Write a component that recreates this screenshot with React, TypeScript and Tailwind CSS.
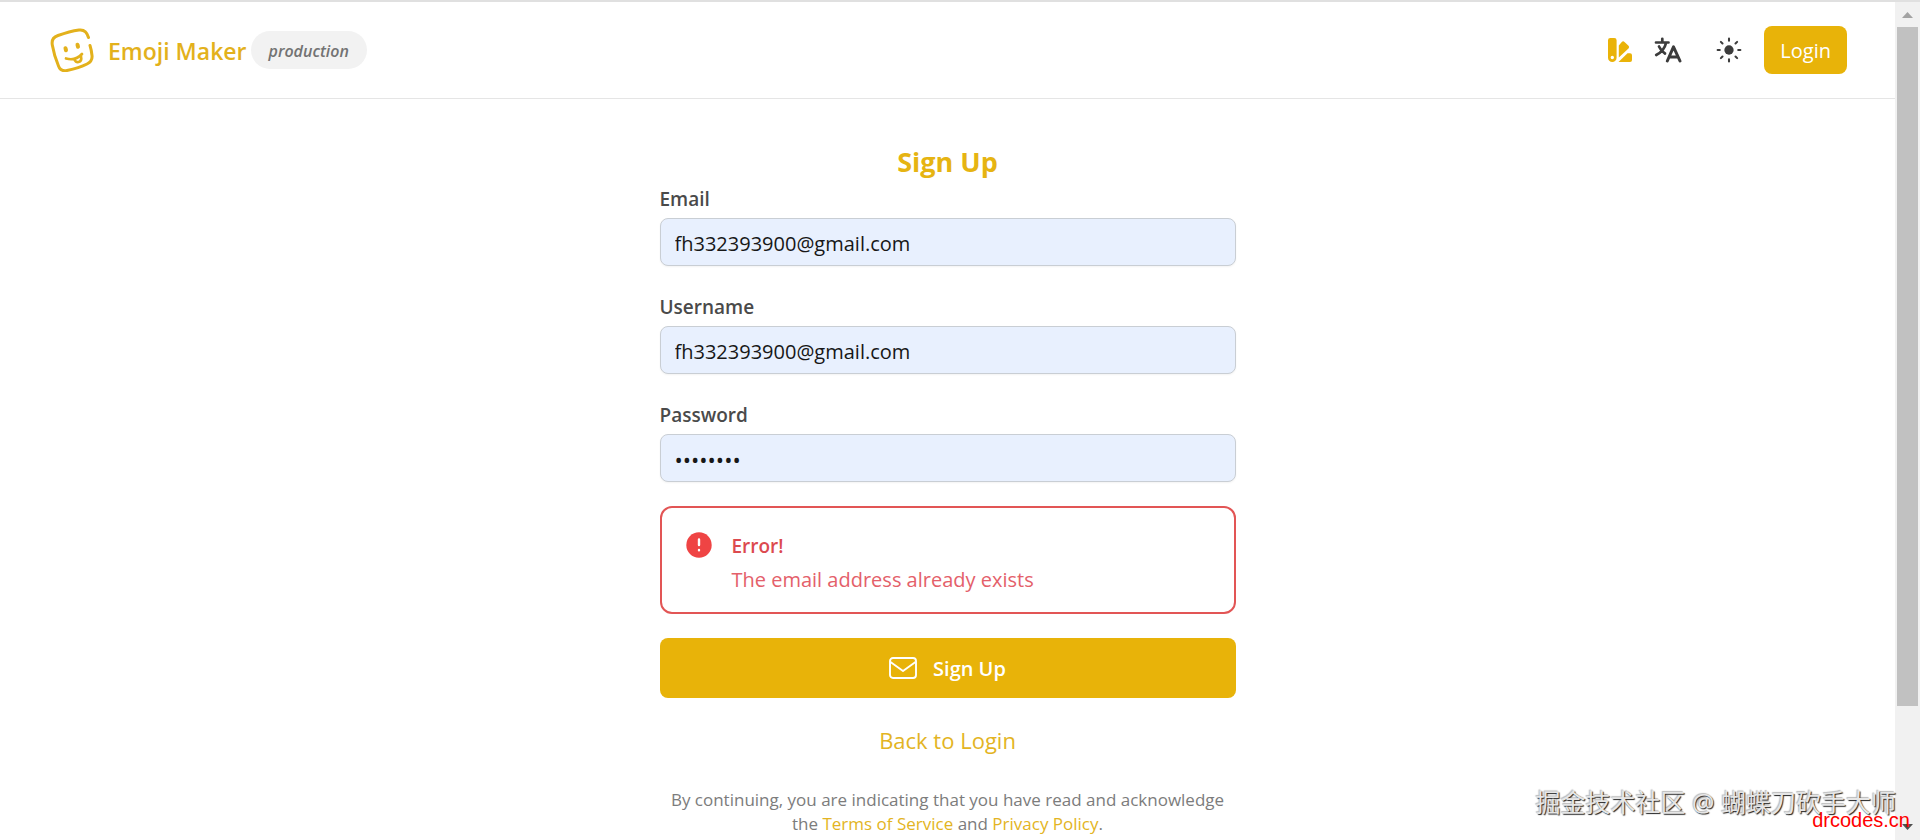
const fields = [
  { id: "email", label: "Email", type: "email", value: "fh332393900@gmail.com", size: "text-xl" },
  { id: "username", label: "Username", type: "text", value: "fh332393900@gmail.com", size: "text-xl" },
  { id: "password", label: "Password", type: "password", value: "password", size: "text-[22px]" },
];

function LogoIcon() {
  return (
    <svg viewBox="0 0 44 44" className="h-11 w-11" fill="none" stroke="currentColor" strokeWidth="3" strokeLinecap="round" aria-hidden="true">
      <path d="M38.500 9.500C37 4 34 1.300 29 2C22 3 15 5 8 7.500C3.500 9 1.500 12.500 2.300 17C3.500 24 5.500 31 8.500 38C10 42 13 43.300 17 42.500C24 41 31 39 37 36C41 34 42.500 31.500 42 27.500C41.600 24 41 20.500 40 17.500" />
      <path d="M15.500 20.300L16 22.300M27.500 16.700L28 18.700" strokeWidth="4" />
      <path d="M16 30.500C22 32.200 28 30.500 32 26M24.500 31C25 36 32.500 35 31 28.500" strokeWidth="2.700" />
    </svg>
  );
}

function SwatchIcon() {
  return (
    <svg viewBox="0 0 24 24" className="h-6 w-6" fill="currentColor" aria-hidden="true">
      <path fillRule="evenodd" d="M2.300 0h4a2.300 2.300 0 0 1 2.300 2.300V19.700a4.300 4.300 0 0 1-8.600 0V2.300A2.300 2.300 0 0 1 2.300 0zM4.300 17.800a1.700 1.700 0 1 0 0 3.400a1.700 1.700 0 0 0 0-3.400z" />
      <path d="M10.800 7.600L13.800 4a1.900 1.900 0 0 1 2.700 0l4 3.700a1.900 1.900 0 0 1 0 2.700L10.800 19.600z" />
      <path d="M10.500 24L19.500 15.200h2.500a2 2 0 0 1 2 2V22a2 2 0 0 1-2 2z" />
    </svg>
  );
}

function TranslateIcon() {
  return (
    <svg viewBox="0 0 28 26" className="h-[26px] w-7" fill="none" stroke="currentColor" strokeWidth="2.700" strokeLinecap="round" strokeLinejoin="round" aria-hidden="true">
      <path d="M2 5.500h12.500M8.300 1.800v3.700M12 6C10.700 12 7 15.600 2.200 18M5 9.500C6.500 13 8.500 15 11 16.500" />
      <path d="M13.300 24L19.500 9.800L26 24M15.500 20h8.500" strokeWidth="3" />
    </svg>
  );
}

function SunIcon() {
  return (
    <svg viewBox="0 0 24 24" className="h-[26px] w-[26px]" fill="currentColor" stroke="currentColor" strokeWidth="1.900" strokeLinecap="round" aria-hidden="true">
      <circle cx="12" cy="12" r="4.300" stroke="none" />
      <path d="M12 1.500v2M12 20.500v2M1.500 12h2M20.500 12h2M4.500 4.500l1.500 1.500M18 18l1.500 1.500M4.500 19.500L6 18M18 6l1.500-1.500" />
    </svg>
  );
}

function MailIcon() {
  return (
    <svg viewBox="0 0 28 22" className="h-[22px] w-7" fill="none" stroke="currentColor" strokeWidth="1.900" strokeLinejoin="round" aria-hidden="true">
      <rect x="1" y="1" width="26" height="20" rx="3" />
      <path d="M1.500 5L14 14l12.500-9" />
    </svg>
  );
}

function Header() {
  return (
    <header className="flex h-[97px] items-center justify-between border-b border-[#e5e5e5] pr-12 pl-[50px]">
      <div className="flex items-center gap-1">
        <a href="#" className="flex items-center gap-3.5 text-[#e3b11c]">
          <LogoIcon />
          <span className="pt-0.5 text-[23px] font-semibold">Emoji Maker</span>
        </a>
        <span className="rounded-full bg-[#f2f2f2] px-[18px] pt-2 pb-1.5 text-base leading-6 font-semibold text-[#737373] italic">production</span>
      </div>
      <div className="flex items-center text-[#3c3c3c]">
        <button aria-label="Theme colour" className="mr-[22px] text-[#eab308]"><SwatchIcon /></button>
        <button aria-label="Language" className="mr-[34px]"><TranslateIcon /></button>
        <button aria-label="Light mode" className="mr-[22px]"><SunIcon /></button>
        <button className="h-12 rounded-lg bg-[#e8b309] px-4 pt-0.5 text-xl text-white">Login</button>
      </div>
    </header>
  );
}

function ErrorAlert() {
  return (
    <div role="alert" className="flex gap-5 rounded-xl border-2 border-[#e25555] px-6 pt-[22px] pb-4">
      <svg viewBox="0 0 26 26" className="mt-0.5 h-[26px] w-[26px] shrink-0" aria-hidden="true">
        <circle cx="13" cy="13" r="12.700" fill="#ef4444" />
        <path d="M13 7.500v5.500M13 18v.2" stroke="#fff" strokeWidth="2.400" strokeLinecap="round" />
      </svg>
      <div>
        <p className="text-[19px] leading-[33px] font-semibold text-[#dc4a4f]">Error!</p>
        <p className="text-xl leading-[33px] text-[#e4606a]">The email address already exists</p>
      </div>
    </div>
  );
}

function Scrollbar() {
  return (
    <div className="flex w-[25px] shrink-0 flex-col items-center bg-[#f1f1f1]" aria-hidden="true">
      <svg viewBox="0 0 25 25" className="h-[25px] w-[25px]"><path d="M7 16l5.500-6 5.500 6z" fill="#a3a3a3" /></svg>
      <div className="h-[81%] w-[21px] bg-[#c1c1c1]" />
      <svg viewBox="0 0 25 25" className="mt-auto h-[25px] w-[25px]"><path d="M7 9l5.500 6 5.500-6z" fill="#505050" /></svg>
    </div>
  );
}

export default function App() {
  return (
    <div className="relative flex h-screen overflow-hidden border-t-2 border-[#e0e0e0] bg-white font-['Open_Sans','Noto_Sans_CJK_SC',sans-serif]">
      <div className="min-w-0 flex-1">
        <Header />
        <main className="mx-auto w-full max-w-xl pt-[43px]">
          <h1 className="text-center text-[27px] leading-10 font-bold text-[#e6b412]">Sign Up</h1>
          <form className="flex flex-col gap-6" onSubmit={(e) => e.preventDefault()}>
            {fields.map((f) => (
              <div key={f.id} className="flex flex-col">
                <label htmlFor={f.id} className="h-9 text-[19px] leading-[34px] font-semibold text-[#4a4a4a]">{f.label}</label>
                <input id={f.id} type={f.type} defaultValue={f.value} className={`h-12 w-full rounded-lg border border-[#c9ced4] bg-[#e8f0fe] px-3.5 pt-0.5 text-[#171717] shadow-xs ${f.size}`} />
              </div>
            ))}
            <ErrorAlert />
            <button className="flex h-15 items-center justify-center gap-4 rounded-lg bg-[#e8b309] text-xl font-semibold text-white">
              <MailIcon />
              <span className="pt-0.5">Sign Up</span>
            </button>
          </form>
          <p className="mt-6 text-center text-[22px] leading-9"><a href="#" className="text-[#e3b423]">Back to Login</a></p>
          <p className="mt-[30px] text-center text-[17px] leading-6 text-[#7c7c7c]">
            By continuing, you are indicating that you have read and acknowledge the <a href="#" className="text-[#e3b423]">Terms of Service</a> and <a href="#" className="text-[#e3b423]">Privacy Policy</a>.
          </p>
        </main>
      </div>
      <Scrollbar />
      <p className="absolute right-6 bottom-[22px] text-[25px] leading-8 text-[#e6e6e6] [text-shadow:1px_1px_1px_#222,-1px_-1px_1px_#bbb]">掘金技术社区 @ 蝴蝶刀砍手大师</p>
      <p className="absolute right-2.5 bottom-2 font-['Liberation_Sans',sans-serif] text-xl leading-6 text-[#ff0000]">drcodes.cn</p>
    </div>
  );
}
